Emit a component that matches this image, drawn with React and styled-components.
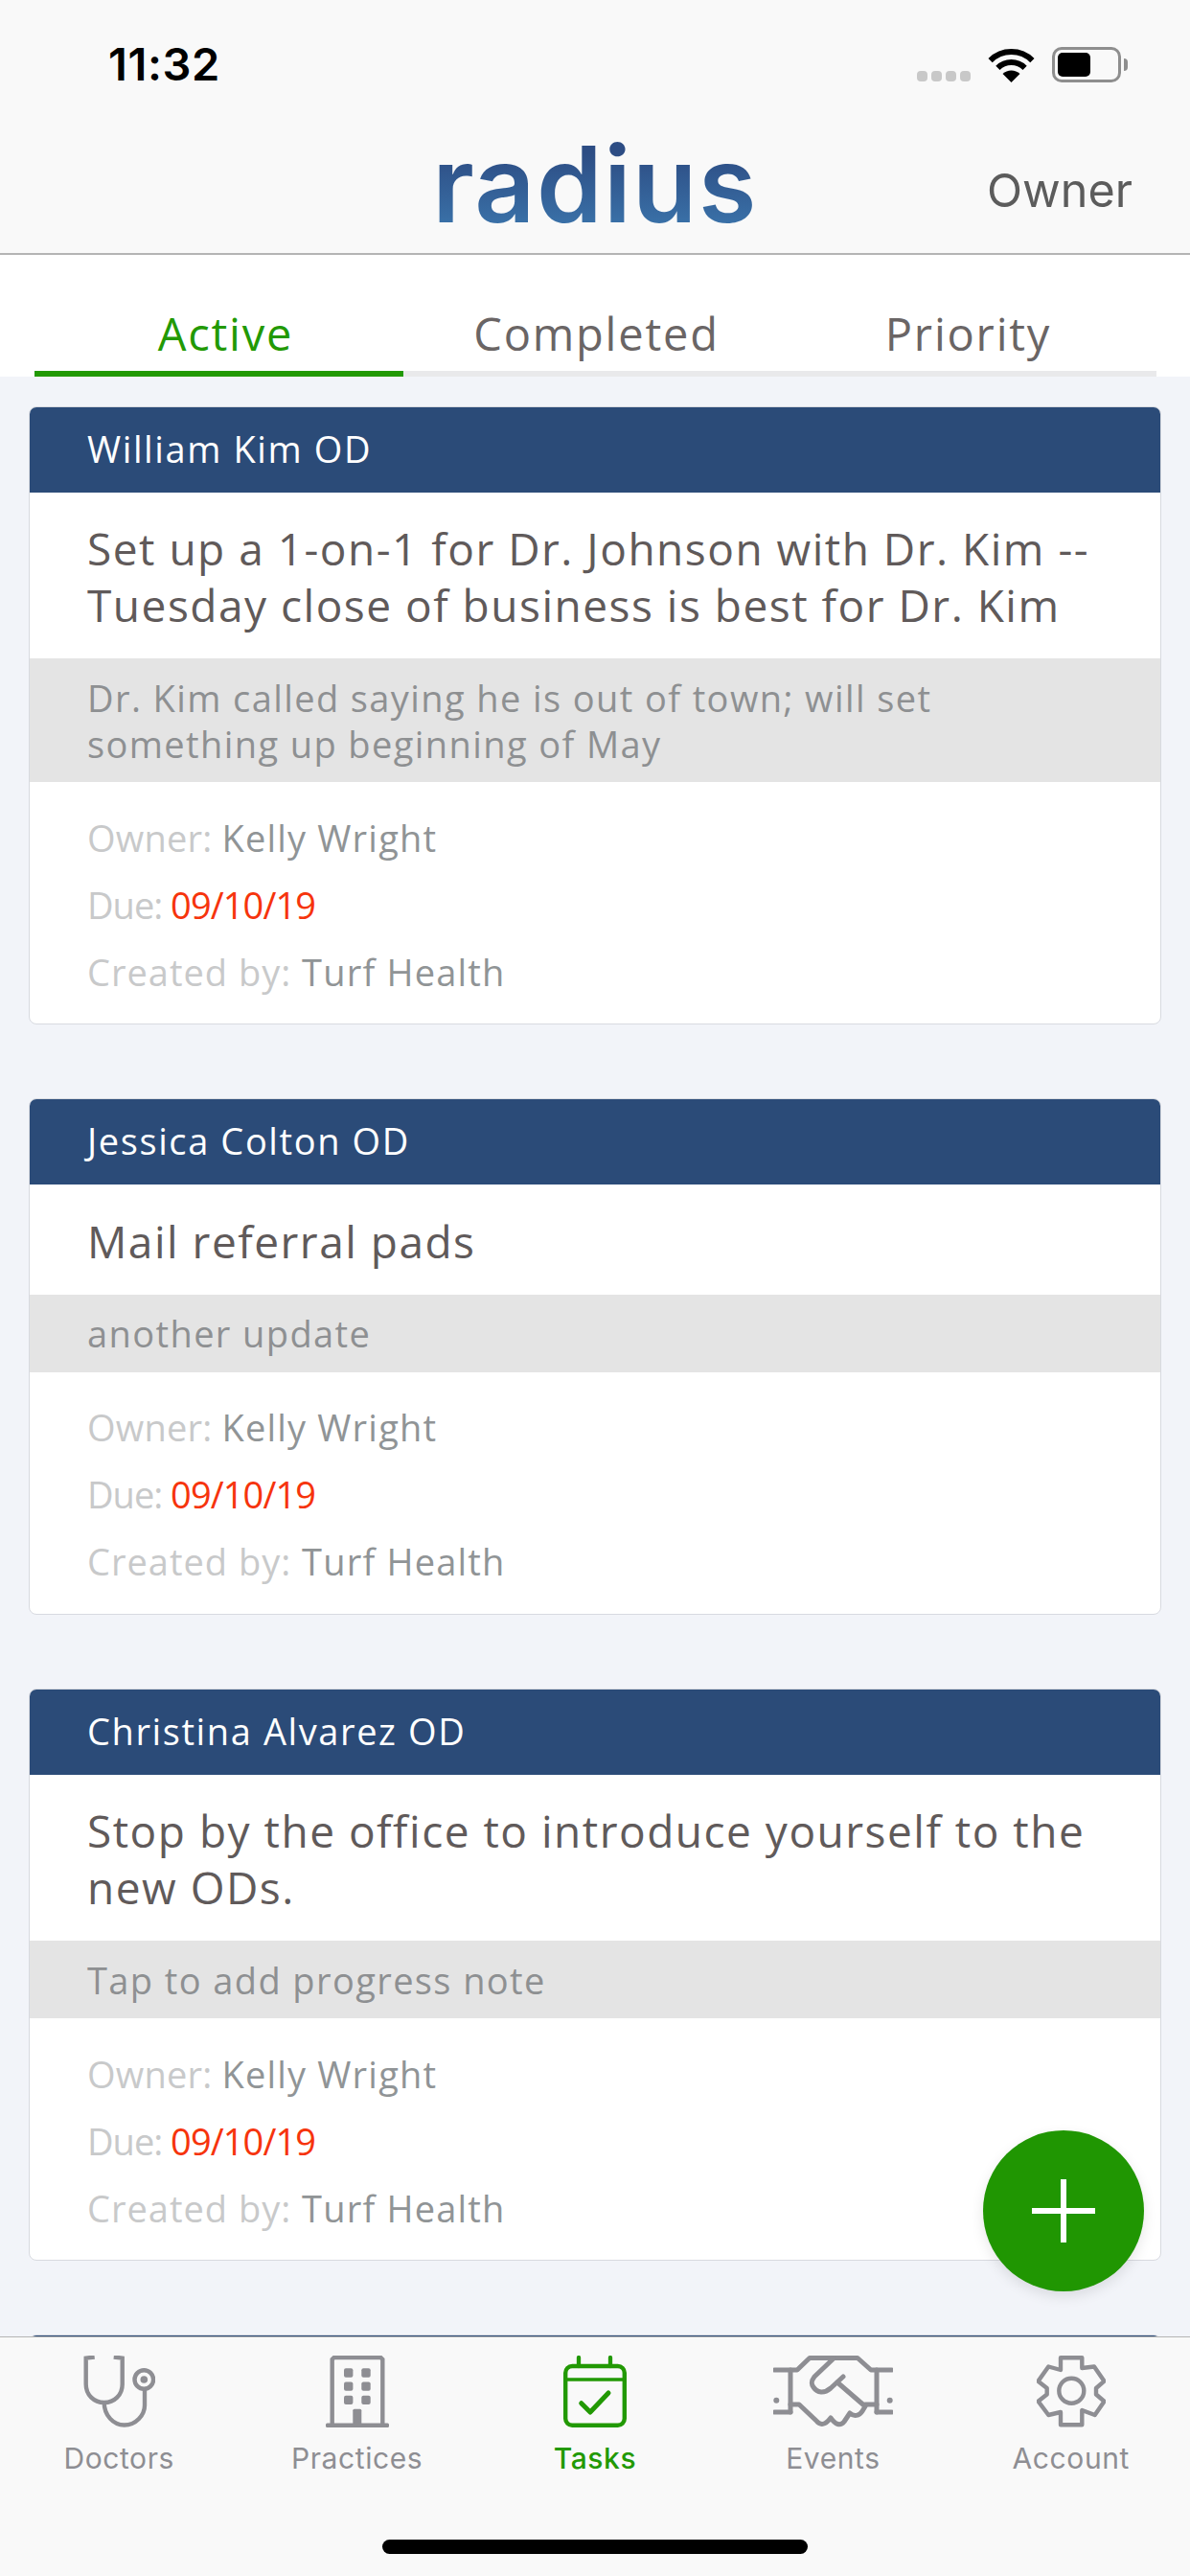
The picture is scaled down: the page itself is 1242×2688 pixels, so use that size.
import React from "react";
import styled, { createGlobalStyle } from "styled-components";

const GlobalStyle = createGlobalStyle`
  html, body {
    margin: 0;
    padding: 0;
    background: #f2f4f9;
  }
`;

const Screen = styled.div`
  width: 1242px;
  height: 2688px;
  display: flex;
  flex-direction: column;
  overflow: hidden;
  position: relative;
  font-family: "Open Sans", "Liberation Sans", sans-serif;
`;

const TopBar = styled.header`
  height: 264px;
  flex: none;
  background: #f9f9f9;
  border-bottom: 2px solid #b4b4b4;
  display: flex;
  flex-direction: column;
`;

const StatusBar = styled.div`
  height: 68px;
  padding: 33px 72px 0 113px;
  display: flex;
  align-items: flex-start;
  justify-content: space-between;
`;

const Clock = styled.span`
  font-family: Inter, sans-serif;
  font-weight: 600;
  font-size: 47px;
  line-height: 68px;
  color: #000;
  letter-spacing: 0.6px;
`;

const StatusIcons = styled.div`
  display: flex;
  align-items: flex-end;
  height: 38px;
  margin-top: 15px;
`;

const SignalDots = styled.div`
  display: flex;
  gap: 4px;
  margin: 0 18px 1px 0;
`;

const SignalDot = styled.i`
  width: 11px;
  height: 11px;
  border-radius: 4px;
  background: #c8c8c8;
`;

const Battery = styled.div`
  width: 72px;
  height: 37px;
  margin-left: 18px;
  box-sizing: border-box;
  border: 3px solid #8e8e8e;
  border-radius: 10px;
  padding: 3px;
  position: relative;
  &::after {
    content: "";
    position: absolute;
    right: -10px;
    top: 9px;
    width: 4px;
    height: 13px;
    background: #8e8e8e;
    border-radius: 0 6px 6px 0;
  }
`;

const BatteryFill = styled.div`
  width: 34px;
  height: 100%;
  background: #000;
  border-radius: 5px;
`;

const NavRow = styled.div`
  flex: 1;
  display: grid;
  grid-template-columns: 1fr auto 1fr;
  align-items: start;
  padding: 0 60px;
`;

const Logo = styled.span`
  grid-column: 2;
  font-family: Inter, sans-serif;
  font-weight: 600;
  font-size: 110px;
  line-height: 130px;
  letter-spacing: 1.4px;
  margin-top: 26px;
  background: linear-gradient(180deg, #2d4d84 25%, #3a72a9 85%);
  -webkit-background-clip: text;
  background-clip: text;
  color: transparent;
`;

const NavAction = styled.span`
  grid-column: 3;
  justify-self: end;
  font-family: Inter, sans-serif;
  font-size: 48.5px;
  line-height: 60px;
  margin-top: 68px;
  color: #5c5c5c;
`;

const Tabs = styled.nav`
  height: 127px;
  flex: none;
  box-sizing: border-box;
  background: #fff;
  padding: 0 35px 0 36px;
  display: grid;
  grid-template-columns: 385px 1fr 1fr;
`;

const Tab = styled.div`
  display: flex;
  align-items: center;
  justify-content: center;
  padding-top: 42px;
  height: 100%;
  box-sizing: border-box;
  font-size: 47px;
  letter-spacing: 1.8px;
  color: ${(p) => (p.$active ? "#229904" : "#6a6565")};
  border-bottom: 6px solid ${(p) => (p.$active ? "#229904" : "#e9e9eb")};
  &:first-child {
    padding-left: 14px;
  }
  &:nth-child(2) {
    padding-left: 10px;
  }
`;

const CardList = styled.main`
  flex: 1;
  min-height: 0;
  overflow: hidden;
  padding: 30.5px 30px 0;
  display: flex;
  flex-direction: column;
  gap: 77px;
`;

const Card = styled.article`
  flex: none;
  background: #fff;
  border: 1px solid #d8dae0;
  border-radius: 8px;
  overflow: hidden;
`;

const CardHeader = styled.div`
  height: 89px;
  background: #2b4b78;
  color: #fff;
  font-size: 38px;
  line-height: 87px;
  padding-left: 60px;
  letter-spacing: 1.6px;
`;

const CardTitle = styled.div`
  padding: 29.5px 60px 26px;
  font-size: 46px;
  line-height: 59px;
  color: #605a5a;
  letter-spacing: 1.5px;
`;

const CardNote = styled.div`
  padding: 16.5px 60px;
  background: #e4e4e4;
  font-size: 38px;
  line-height: 48px;
  color: #8e9092;
  letter-spacing: 1.4px;
`;

const CardMeta = styled.div`
  padding: 22.5px 60px 19.5px;
`;

const MetaRow = styled.div`
  font-size: 38px;
  line-height: 70px;
  color: #c8c9ca;
`;

const MetaLabel = styled.span`
  letter-spacing: ${(p) => p.$spacing}px;
`;

const MetaValue = styled.span`
  letter-spacing: ${(p) => (p.$overdue ? "-0.9px" : "1.2px")};
  color: ${(p) => (p.$overdue ? "#f6340c" : "#909496")};
`;

const Fab = styled.button`
  position: absolute;
  left: 1026px;
  top: 2223px;
  width: 168px;
  height: 168px;
  border: none;
  padding: 0;
  border-radius: 50%;
  background: #209602;
  box-shadow: 0 5px 14px rgba(0, 0, 0, 0.1);
  display: flex;
  align-items: center;
  justify-content: center;
`;

const TabBar = styled.footer`
  height: 250px;
  flex: none;
  box-sizing: border-box;
  background: #f9f9f9;
  border-top: 1px solid #b4b4b4;
  position: relative;
  display: grid;
  grid-template-columns: repeat(5, 1fr);
  align-items: start;
  padding-top: 19px;
`;

const TabItem = styled.div`
  display: flex;
  flex-direction: column;
  align-items: center;
  color: ${(p) => (p.$active ? "#229904" : "#8e8e93")};
  font-family: Inter, sans-serif;
  font-size: 30px;
  font-weight: ${(p) => (p.$active ? 500 : 400)};
  letter-spacing: 0.6px;
  line-height: 36px;
`;

const TabIcon = styled.div`
  height: 75px;
  margin-bottom: 14px;
  display: flex;
  align-items: center;
`;

const HomeIndicator = styled.div`
  position: absolute;
  left: 399px;
  top: 211px;
  width: 444px;
  height: 15px;
  border-radius: 8px;
  background: #000;
`;

const WifiIcon = () => (
  <svg width="49" height="36" viewBox="0 0 49 36">
    <g fill="none" stroke="#000" strokeWidth="6">
      <path d="M2.6 13.1A31 31 0 0 1 46.4 13.1" />
      <path d="M10.4 20.9A20 20 0 0 1 38.6 20.9" />
    </g>
    <path d="M24.5 36L15.5 27A13 13 0 0 1 33.5 27Z" fill="#000" />
  </svg>
);

const DoctorsIcon = () => (
  <svg width="75" height="75" viewBox="0 0 75 75" fill="none" stroke="currentColor" strokeWidth="4.4">
    <path d="M11.7 1.6L2.7 2.6V30C2.7 41 11 49 21.7 49C32.5 49 40.7 41 40.7 30V2.6L31.7 1.6" />
    <path d="M21.7 49C21.7 62 31 72.5 42.7 72.5C55 72.5 64 62 64 52V36" />
    <circle cx="63.3" cy="25" r="9.8" />
    <circle cx="63.3" cy="25" r="3.8" fill="currentColor" stroke="none" />
  </svg>
);

const PracticesIcon = () => (
  <svg width="66" height="75" viewBox="0 0 66 75" fill="currentColor">
    <path d="M6.7 73V4L8.7 2H57.3L59.3 4V73" fill="none" stroke="currentColor" strokeWidth="4.4" />
    <rect x="0" y="70.5" width="66" height="4.5" rx="1.5" />
    <rect x="19" y="13.3" width="9.4" height="9.4" rx="2" />
    <rect x="37.3" y="13.3" width="9.4" height="9.4" rx="2" />
    <rect x="19" y="27.6" width="9.4" height="9.2" rx="2" />
    <rect x="37.3" y="27.6" width="9.4" height="9.2" rx="2" />
    <rect x="19" y="41.7" width="9.4" height="9.4" rx="2" />
    <rect x="37.3" y="41.7" width="9.4" height="9.4" rx="2" />
    <rect x="28.3" y="55.7" width="9" height="16" rx="1.5" />
  </svg>
);

const TasksIcon = () => (
  <svg width="66" height="75" viewBox="0 0 66 75" fill="none" stroke="currentColor" strokeLinecap="round" strokeLinejoin="round">
    <path d="M16 2V11M49 2V11" strokeWidth="4.3" />
    <rect x="2.2" y="11" width="61.6" height="61.8" rx="7" strokeWidth="4.4" />
    <path d="M2.2 25H63.8" strokeWidth="3.6" />
    <path d="M18.7 49.7L28 59L47 39" strokeWidth="5" />
  </svg>
);

const EventsIcon = () => (
  <svg width="125" height="75" viewBox="0 0 125 75" fill="none" stroke="currentColor" strokeWidth="5" strokeLinecap="round" strokeLinejoin="round">
    <path d="M1.5 15H25L38 2.5H88L102 15H123.5" />
    <path d="M18 15V59M108 15V59" />
    <path d="M1.5 59H18M108 59H123.5" />
    <path d="M18 51H27L45 68C49 73 54 73 60 65C65 72 70 74 74 69L80 60C84 64 90 63 93 58L96 53L67 28" />
    <path d="M73 22L60 34C53 40 46 39 42 33C39 29 40 26 43 22L63 3" />
    <path d="M96 51H108" />
    <circle cx="3.3" cy="46.7" r="3" fill="currentColor" stroke="none" />
    <circle cx="121.7" cy="46.7" r="3" fill="currentColor" stroke="none" />
  </svg>
);

const AccountIcon = () => (
  <svg width="72" height="75" viewBox="0 0 72 75" fill="none" stroke="currentColor" strokeWidth="4.4" strokeLinejoin="round">
    <path d="M25 2.3H47.3V13L60 11.5L70.5 26.7L62 34V40.5L70.5 47.7L60.7 62L47.3 57V72.3H25V59L12.3 62L1.5 47.7L10.7 40.5V34L1.5 26.7L12.3 11.5L25 15Z" />
    <circle cx="36.3" cy="36.7" r="13" />
  </svg>
);

const tasks = [
  {
    doctor: "William Kim OD",
    title: "Set up a 1-on-1 for Dr. Johnson with Dr. Kim -- Tuesday close of business is best for Dr. Kim",
    note: "Dr. Kim called saying he is out of town; will set something up beginning of May",
  },
  { doctor: "Jessica Colton OD", title: "Mail referral pads", note: "another update" },
  {
    doctor: "Christina Alvarez OD",
    title: "Stop by the office to introduce yourself to the new ODs.",
    note: "Tap to add progress note",
  },
];

const navItems = [
  { label: "Doctors", icon: <DoctorsIcon /> },
  { label: "Practices", icon: <PracticesIcon /> },
  { label: "Tasks", icon: <TasksIcon />, active: true },
  { label: "Events", icon: <EventsIcon /> },
  { label: "Account", icon: <AccountIcon /> },
];

export default function App() {
  return (
    <Screen>
      <GlobalStyle />
      <TopBar>
        <StatusBar>
          <Clock>11:32</Clock>
          <StatusIcons>
            <SignalDots>
              <SignalDot />
              <SignalDot />
              <SignalDot />
              <SignalDot />
            </SignalDots>
            <WifiIcon />
            <Battery>
              <BatteryFill />
            </Battery>
          </StatusIcons>
        </StatusBar>
        <NavRow>
          <Logo>radius</Logo>
          <NavAction>Owner</NavAction>
        </NavRow>
      </TopBar>
      <Tabs>
        <Tab $active>Active</Tab>
        <Tab>Completed</Tab>
        <Tab>Priority</Tab>
      </Tabs>
      <CardList>
        {tasks.map((t) => (
          <Card key={t.doctor}>
            <CardHeader>{t.doctor}</CardHeader>
            <CardTitle>{t.title}</CardTitle>
            <CardNote>{t.note}</CardNote>
            <CardMeta>
              <MetaRow>
                <MetaLabel $spacing={0.2}>Owner: </MetaLabel>
                <MetaValue>Kelly Wright</MetaValue>
              </MetaRow>
              <MetaRow>
                <MetaLabel $spacing={-1}>Due: </MetaLabel>
                <MetaValue $overdue>09/10/19</MetaValue>
              </MetaRow>
              <MetaRow>
                <MetaLabel $spacing={1}>Created by: </MetaLabel>
                <MetaValue>Turf Health</MetaValue>
              </MetaRow>
            </CardMeta>
          </Card>
        ))}
        <Card>
          <CardHeader />
        </Card>
      </CardList>
      <Fab aria-label="Add task">
        <svg width="66" height="66" viewBox="0 0 66 66">
          <path d="M33 1V65M1 33H65" stroke="#fff" strokeWidth="6" strokeLinecap="round" />
        </svg>
      </Fab>
      <TabBar>
        {navItems.map((item) => (
          <TabItem key={item.label} $active={item.active}>
            <TabIcon>{item.icon}</TabIcon>
            {item.label}
          </TabItem>
        ))}
        <HomeIndicator />
      </TabBar>
    </Screen>
  );
}
